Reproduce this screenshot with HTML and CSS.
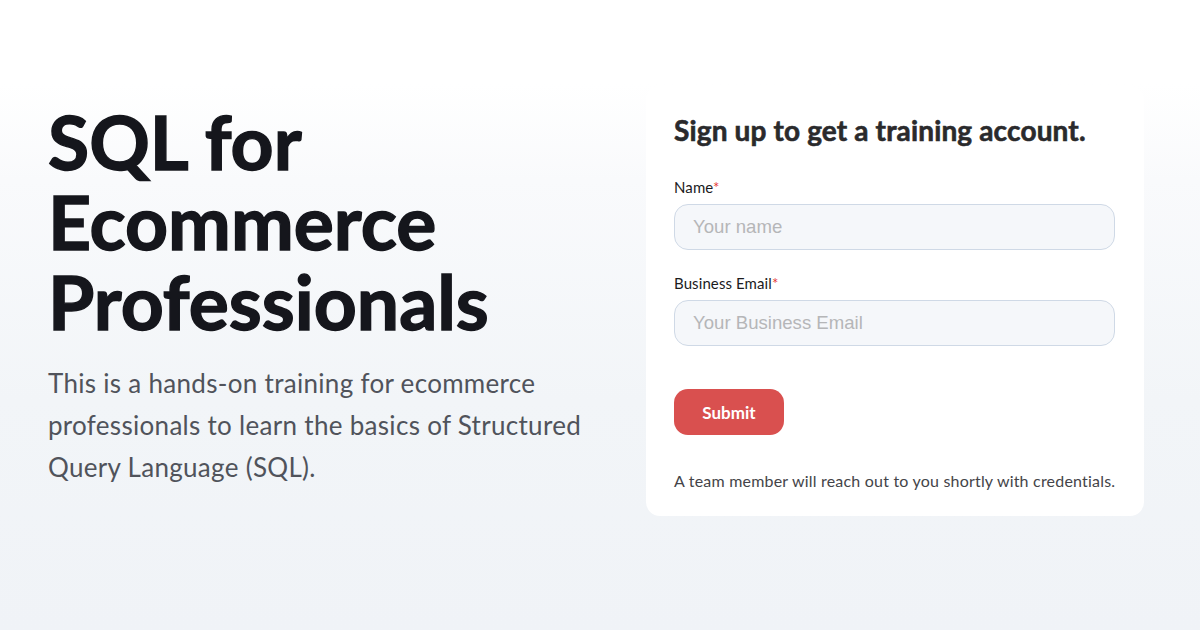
FILE: index.html
```html
<!DOCTYPE html>
<html>

    <head>
        <meta charset="utf-8">
        <title>SQL for Ecommerce Professionals</title>
        <meta name="viewport" content="width=device-width, initial-scale=1">

        <link rel="stylesheet" href="styles.css">
    </head>

    <body>
        <div class="hero">
            <div class="intro">
                <h1 class="headline">SQL for Ecommerce Professionals</h1>
                <p class="lead">This is a hands-on training for ecommerce professionals to learn the basics of Structured Query Language (SQL).</p>
            </div>

            <div class="signup-card">
                <h2 class="signup-title">Sign up to get a training account.</h2>
                <form class="signup-form">
                    <label class="field-label" for="name">Name<span class="required">*</span></label>
                    <input class="field-input" id="name" type="text" placeholder="Your name">

                    <label class="field-label" for="email">Business Email<span class="required">*</span></label>
                    <input class="field-input" id="email" type="email" placeholder="Your Business Email">

                    <button class="submit-btn" type="button">Submit</button>
                </form>
                <p class="signup-note">A team member will reach out to you shortly with credentials.</p>
            </div>
        </div>
    </body>

</html>
```

FILE: styles.css
```css
* {
    font-family: 'Lato', 'Noto Sans', sans-serif;
    box-sizing: border-box;
}

body {
    margin: 0px;
    padding: 0px;
    height: 100vh;
    background: linear-gradient(to bottom, #ffffff 0px, #ffffff 84px, #f9fafc 180px, #f2f5f8 400px, #f0f3f7 630px);
}

.hero {
    display: flex;
    flex-direction: row;
    padding-top: 86px;
}

.intro {
    width: 646px;
    padding-left: 48px;
    padding-top: 15px;
}

/* only one bold weight installed, so thicken the strokes a bit */
.headline {
    margin: 0px;
    font-size: 75px;
    line-height: 80px;
    font-weight: 700;
    color: #15161c;
    -webkit-text-stroke: 1.4px #15161c;
    width: 490px;
}

.lead {
    margin: 21px 0 0 0;
    font-size: 26px;
    line-height: 42px;
    letter-spacing: 0.3px;
    color: #50535b;
    width: 570px;
}

.signup-card {
    width: 498px;
    background-color: white;
    border-radius: 14px;
    padding: 28px 28px 26px 28px;
}

.signup-title {
    margin: 0px;
    font-size: 28px;
    font-weight: 700;
    color: #2a2a2c;
    -webkit-text-stroke: 0.6px #2a2a2c;
    letter-spacing: 0.15px;
    line-height: 32px;
}

.signup-form {
    display: flex;
    flex-direction: column;
    margin-top: 32px;
}

.field-label {
    font-size: 15px;
    line-height: 18px;
    color: #1b1b1d;
    margin-bottom: 8px;
    letter-spacing: 0.1px;
}

.required {
    color: #e53935;
}

.field-input {
    height: 46px;
    width: 441px;
    border: 1px solid #cfd9e6;
    border-radius: 14px;
    background-color: #f5f7fa;
    padding-left: 18px;
    padding-top: 1px;
    font-family: 'Liberation Sans', Arial, sans-serif;
    font-size: 18.6px;
    color: #333;
    margin-bottom: 24px;
}

.field-input::placeholder {
    color: #b5b6b8;
}

.submit-btn {
    margin-top: 19px;
    width: 110px;
    height: 46px;
    border: none;
    border-radius: 14px;
    background-color: #d9504f;
    color: white;
    font-size: 17px;
    font-weight: 700;
}

.signup-note {
    margin: 36px 0 0 0;
    font-size: 16px;
    line-height: 19px;
    letter-spacing: 0.2px;
    white-space: nowrap;
    color: #444448;
}
```
